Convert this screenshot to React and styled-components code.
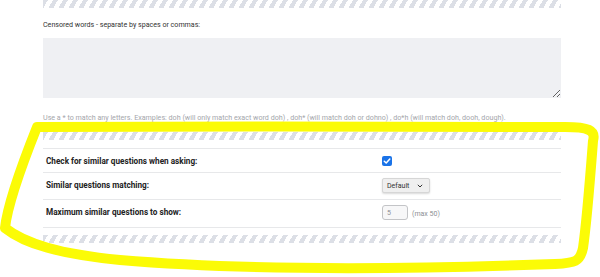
import React from 'react';
import styled, { createGlobalStyle } from 'styled-components';

const GlobalStyle = createGlobalStyle`
  html, body {
    margin: 0;
    padding: 0;
    background: #ffffff;
  }
  body {
    width: 600px;
    height: 277px;
    overflow: hidden;
    font-family: Roboto, "Liberation Sans", Arial, sans-serif;
  }
`;

const Page = styled.div`
  position: relative;
  width: 600px;
  height: 277px;
  overflow: hidden;
  background: #ffffff;
`;

const Content = styled.div`
  display: flex;
  flex-direction: column;
  width: 518px;
  padding-left: 43px;
`;

const Stripes = styled.div`
  height: 8px;
  margin-top: ${props => props.$gap || 0}px;
  background: repeating-linear-gradient(
    120deg,
    #dcdfe6 0 4.2px,
    #ffffff 4.2px 8.66px
  );
`;

const FieldLabel = styled.label`
  margin-top: 12px;
  font-size: 7.1px;
  line-height: 9px;
  color: #333;
`;

const WordsArea = styled.textarea`
  box-sizing: border-box;
  margin-top: 9px;
  width: 518px;
  height: 60px;
  border: none;
  outline: none;
  background: #eff0f3;
  resize: vertical;
  font-family: inherit;
`;

const Hint = styled.div`
  margin-top: 15px;
  font-size: 7.15px;
  line-height: 9px;
  color: #a4a6ab;
  white-space: nowrap;
`;

const SettingsTable = styled.div`
  margin-top: 8px;
  border-top: 1px solid #e7e8ea;
`;

const Row = styled.div`
  display: grid;
  grid-template-columns: 339px 1fr;
  align-items: start;
  padding: 7px 0 ${props => props.$bottom || 6}px;
  border-bottom: 1px solid #e7e8ea;
`;

const RowLabel = styled.div`
  padding-left: 3px;
  font-size: 8.2px;
  line-height: 10px;
  font-weight: 700;
  color: #222;
`;

const Value = styled.div`
  display: flex;
  align-items: center;
  gap: 4px;
  font-size: 7px;
  color: #8d8f94;
`;

const Check = styled.span`
  display: flex;
  align-items: center;
  justify-content: center;
  width: 10px;
  height: 10px;
  border-radius: 2px;
  background: #1a73e8;
`;

const Select = styled.div`
  box-sizing: border-box;
  display: flex;
  align-items: center;
  justify-content: space-between;
  margin-top: -2px;
  width: 48px;
  height: 15px;
  padding: 0 6px 0 4px;
  border: 1px solid #d6d6d6;
  border-radius: 2px;
  background: #efefef;
  box-shadow: 0 1px 2px rgba(0, 0, 0, 0.15);
  font-size: 7px;
  color: #333;
`;

const NumberBox = styled.div`
  box-sizing: border-box;
  display: flex;
  align-items: center;
  margin-top: -2px;
  width: 26px;
  height: 15px;
  padding-left: 4px;
  border: 1px solid #c3c4c7;
  border-radius: 3px;
  background: #f7f7f8;
  font-size: 7px;
  color: #8d8f94;
`;

const Highlight = styled.svg`
  position: absolute;
  left: 0;
  top: 0;
  pointer-events: none;
`;

const App = () => {
  return (
    <Page>
      <GlobalStyle />
      <Content>
        <Stripes />
        <FieldLabel>Censored words - separate by spaces or commas:</FieldLabel>
        <WordsArea />
        <Hint>
          Use a * to match any letters. Examples: doh (will only match exact word doh) , doh* (will match doh or dohno) , do*h (will match doh, dooh, dough).
        </Hint>
        <Stripes $gap={10} />

        <SettingsTable>
          <Row>
            <RowLabel>Check for similar questions when asking:</RowLabel>
            <Value>
              <Check>
                <svg width="8" height="8" viewBox="0 0 8 8">
                  <path d="M1.3 4.2 L3.2 6 L6.8 2" fill="none" stroke="#fff" strokeWidth="1.5" strokeLinecap="round" strokeLinejoin="round" />
                </svg>
              </Check>
            </Value>
          </Row>
          <Row>
            <RowLabel>Similar questions matching:</RowLabel>
            <Value>
              <Select>
                Default
                <svg width="6" height="4" viewBox="0 0 6 4">
                  <path d="M0.8 0.8 L3 3 L5.2 0.8" fill="none" stroke="#333" strokeWidth="1" />
                </svg>
              </Select>
            </Value>
          </Row>
          <Row $bottom={7}>
            <RowLabel>Maximum similar questions to show:</RowLabel>
            <Value>
              <NumberBox>5</NumberBox>
              (max 50)
            </Value>
          </Row>
        </SettingsTable>
        <Stripes $gap={7} />
      </Content>

      <Highlight width="600" height="277" viewBox="0 0 600 277">
        <path
          d="M37 127 C200 126, 420 127, 565 127 C588 127, 596 130, 593 141 C590 180, 587 220, 583 248 C580 262, 575 263, 555 264 C420 269, 250 271, 120 260 C60 254, 25 244, 5 228 C8 200, 27 152, 37 127 Z"
          fill="none"
          stroke="#fbfb06"
          strokeWidth="10"
          strokeLinejoin="round"
          strokeLinecap="round"
        />
      </Highlight>
    </Page>
  );
};

export default App;
